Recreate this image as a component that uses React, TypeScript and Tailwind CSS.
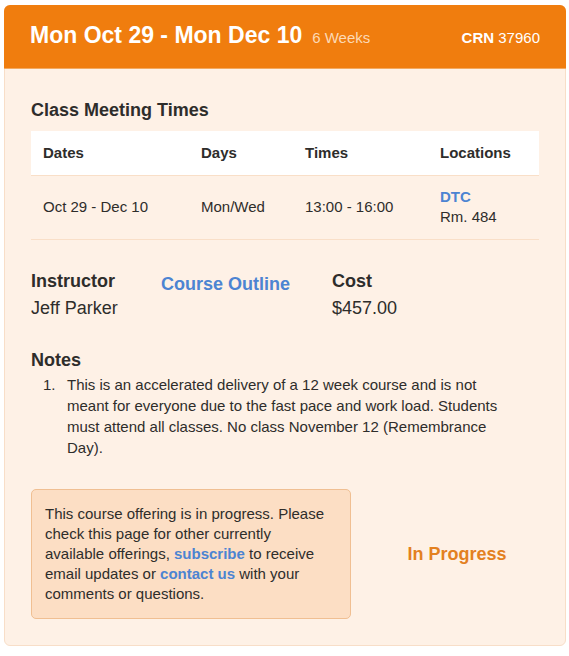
const times = [
  { dates: "Oct 29 - Dec 10", days: "Mon/Wed", times: "13:00 - 16:00", campus: "DTC", room: "Rm. 484" },
];

const notes = [
  "This is an accelerated delivery of a 12 week course and is not meant for everyone due to the fast pace and work load. Students must attend all classes. No class November 12 (Remembrance Day).",
];

const link = "font-bold text-[#4c84d2] hover:underline";
const cell = "px-3 text-left";

function MeetingTimes() {
  return (
    <section>
      <h3 className="text-lg leading-5 font-bold">Class Meeting Times</h3>
      <table className="mt-[11px] w-full table-fixed border-collapse">
        <colgroup>
          <col className="w-[158px]" />
          <col className="w-[104px]" />
          <col className="w-[135px]" />
          <col />
        </colgroup>
        <thead>
          <tr className="h-11 border-b border-[#f9dfc8] bg-white">
            <th className={cell}>Dates</th>
            <th className={cell}>Days</th>
            <th className={cell}>Times</th>
            <th className={cell}>Locations</th>
          </tr>
        </thead>
        <tbody>
          {times.map((row) => (
            <tr key={row.dates} className="h-16 border-b border-[#f9dfc8]">
              <td className={cell}>{row.dates}</td>
              <td className={cell}>{row.days}</td>
              <td className={cell}>{row.times}</td>
              <td className={cell}>
                <a href="#dtc" className={link}>{row.campus}</a>
                <div>{row.room}</div>
              </td>
            </tr>
          ))}
        </tbody>
      </table>
    </section>
  );
}

export default function App() {
  return (
    <main className="pt-[5px] pr-[3px] pb-2 pl-1 font-['Liberation_Sans',Arial,sans-serif] text-[15px] leading-5 text-[#2e2d2b]">
      <article className="rounded-md border border-[#f8dec8] bg-[#fef1e6]">
        <header className="-m-px flex h-16 items-center justify-between rounded-t-md border-b border-[#f3a95f] bg-[#f07d0e] px-[26px] pb-1 text-white">
          <h2 className="pt-1 text-[23px] leading-8 font-bold">
            Mon Oct 29 - Mon Dec 10
            <small className="ml-[10px] text-[15px] font-normal text-[#fcd9b5]">6 Weeks</small>
          </h2>
          <p className="pt-[6px]"><strong>CRN</strong> 37960</p>
        </header>
        <div className="px-[26px] pt-8 pb-[26px]">
          <MeetingTimes />
          <div className="mt-7 flex text-lg leading-[27px]">
            <div className="w-[130px]">
              <h3 className="font-bold">Instructor</h3>
              <p>Jeff Parker</p>
            </div>
            <div className="w-[171px] pt-[3px]">
              <a href="#outline" className={link}>Course Outline</a>
            </div>
            <div>
              <h3 className="font-bold">Cost</h3>
              <p>$457.00</p>
            </div>
          </div>
          <section className="mt-[25px]">
            <h3 className="text-lg leading-[27px] font-bold">Notes</h3>
            <ol className="pr-6 pl-3">
              {notes.map((note, i) => (
                <li key={note} className="flex leading-[21px]">
                  <span className="w-6 shrink-0">{i + 1}.</span>
                  <p>{note}</p>
                </li>
              ))}
            </ol>
          </section>
          <div className="mt-[31px] flex items-center">
            <p className="w-80 rounded-[5px] border border-[#f0bf92] bg-[#fcdec4] py-[14px] pr-5 pl-[13px]">
              This course offering is in progress. Please check this page for other currently available offerings, <a href="#subscribe" className={link}>subscribe</a> to receive email updates or <a href="#contact" className={link}>contact us</a> with your comments or questions.
            </p>
            <strong className="flex-1 pl-6 text-center text-lg text-[#e3801f]">In Progress</strong>
          </div>
        </div>
      </article>
    </main>
  );
}
